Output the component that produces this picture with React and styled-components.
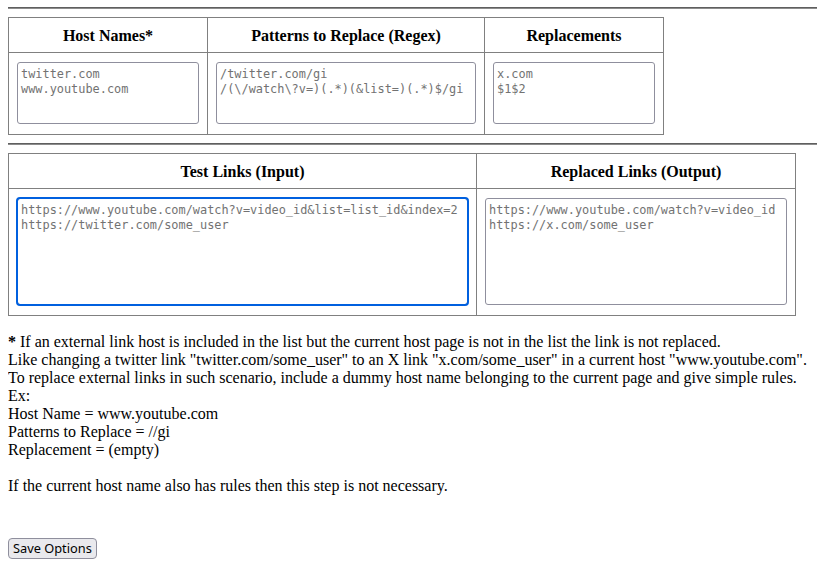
import React from "react";
import styled, { createGlobalStyle } from "styled-components";

const GlobalStyle = createGlobalStyle`
  html, body { background: #ffffff; }
  body {
    margin: 7px 0 8px 8px;
    font-family: "Liberation Serif", "Times New Roman", serif;
    font-size: 16px;
    color: #000000;
  }
`;

const Rule = styled.hr`
  margin: 0 0 8px 0;
  height: 0;
  border: none;
  border-top: 1px solid #5f5f5f;
  border-bottom: 1px solid #8c8c8c;
`;

const Grid = styled.table`
  border-collapse: collapse;
  border: 1px solid #808080;
  margin: 0 0 8px 0;
`;

const HeadCell = styled.th`
  border: 1px solid #808080;
  padding: 9px 8px 7px 8px;
  font-weight: bold;
  font-size: 16px;
  line-height: 18px;
  text-align: center;
  vertical-align: middle;
`;

const Cell = styled.td`
  border: 1px solid #808080;
  padding: 8px;
  vertical-align: top;
`;

const Field = styled.textarea`
  display: block;
  box-sizing: border-box;
  width: ${(p) => p.$w}px;
  height: ${(p) => p.$h}px;
  margin: 1px 0 2px 0;
  padding: 4px 3px 2px 3px;
  border: 1px solid #8f8f9d;
  border-radius: 3px;
  background: #ffffff;
  font-family: "DejaVu Sans Mono", "Liberation Mono", monospace;
  font-size: 11.9px;
  line-height: 15px;
  color: #000000;
  resize: none;
  overflow: hidden;
  white-space: pre;
  outline: ${(p) => (p.$focused ? "2px solid #0060df" : "none")};
  outline-offset: -1px;

  &::placeholder {
    color: #727272;
    opacity: 1;
  }
`;

const Note = styled.p`
  margin: 17px 0 0 0;
  line-height: 18px;
`;

const Footer = styled.div`
  margin-top: 43px;
`;

const SaveButton = styled.button`
  box-sizing: border-box;
  height: 21px;
  padding: 0 4px;
  border: 1px solid #8f8f9d;
  border-radius: 4px;
  background: #e9e9ed;
  color: #000000;
  font-family: "Segoe UI", "Noto Sans", sans-serif;
  font-size: 12.8px;
  line-height: 17px;
`;

export default function App() {
  return (
    <>
      <GlobalStyle />
      <Rule />
      <Grid>
        <thead>
          <tr>
            <HeadCell>Host Names*</HeadCell>
            <HeadCell>Patterns to Replace (Regex)</HeadCell>
            <HeadCell>Replacements</HeadCell>
          </tr>
        </thead>
        <tbody>
          <tr>
            <Cell>
              <Field $w={182} $h={62} placeholder={"twitter.com\nwww.youtube.com"} />
            </Cell>
            <Cell>
              <Field
                $w={260}
                $h={62}
                placeholder={"/twitter.com/gi\n/(\\/watch\\?v=)(.*)(&list=)(.*)$/gi"}
              />
            </Cell>
            <Cell>
              <Field $w={162} $h={62} placeholder={"x.com\n$1$2"} />
            </Cell>
          </tr>
        </tbody>
      </Grid>
      <Rule />
      <Grid>
        <thead>
          <tr>
            <HeadCell>Test Links (Input)</HeadCell>
            <HeadCell>Replaced Links (Output)</HeadCell>
          </tr>
        </thead>
        <tbody>
          <tr>
            <Cell>
              <Field
                $w={451}
                $h={107}
                $focused
                placeholder={
                  "https://www.youtube.com/watch?v=video_id&list=list_id&index=2\nhttps://twitter.com/some_user"
                }
              />
            </Cell>
            <Cell>
              <Field
                $w={302}
                $h={107}
                readOnly
                placeholder={"https://www.youtube.com/watch?v=video_id\nhttps://x.com/some_user"}
              />
            </Cell>
          </tr>
        </tbody>
      </Grid>
      <Note>
        <b>*</b> If an external link host is included in the list but the current host page is not in the list the link is not replaced.
        <br />
        Like changing a twitter link "twitter.com/some_user" to an X link "x.com/some_user" in a current host "www.youtube.com".
        <br />
        To replace external links in such scenario, include a dummy host name belonging to the current page and give simple rules.
        <br />
        Ex:
        <br />
        Host Name = www.youtube.com
        <br />
        Patterns to Replace = //gi
        <br />
        Replacement = (empty)
        <br />
        <br />
        If the current host name also has rules then this step is not necessary.
      </Note>
      <Footer>
        <SaveButton type="button">Save Options</SaveButton>
      </Footer>
    </>
  );
}
